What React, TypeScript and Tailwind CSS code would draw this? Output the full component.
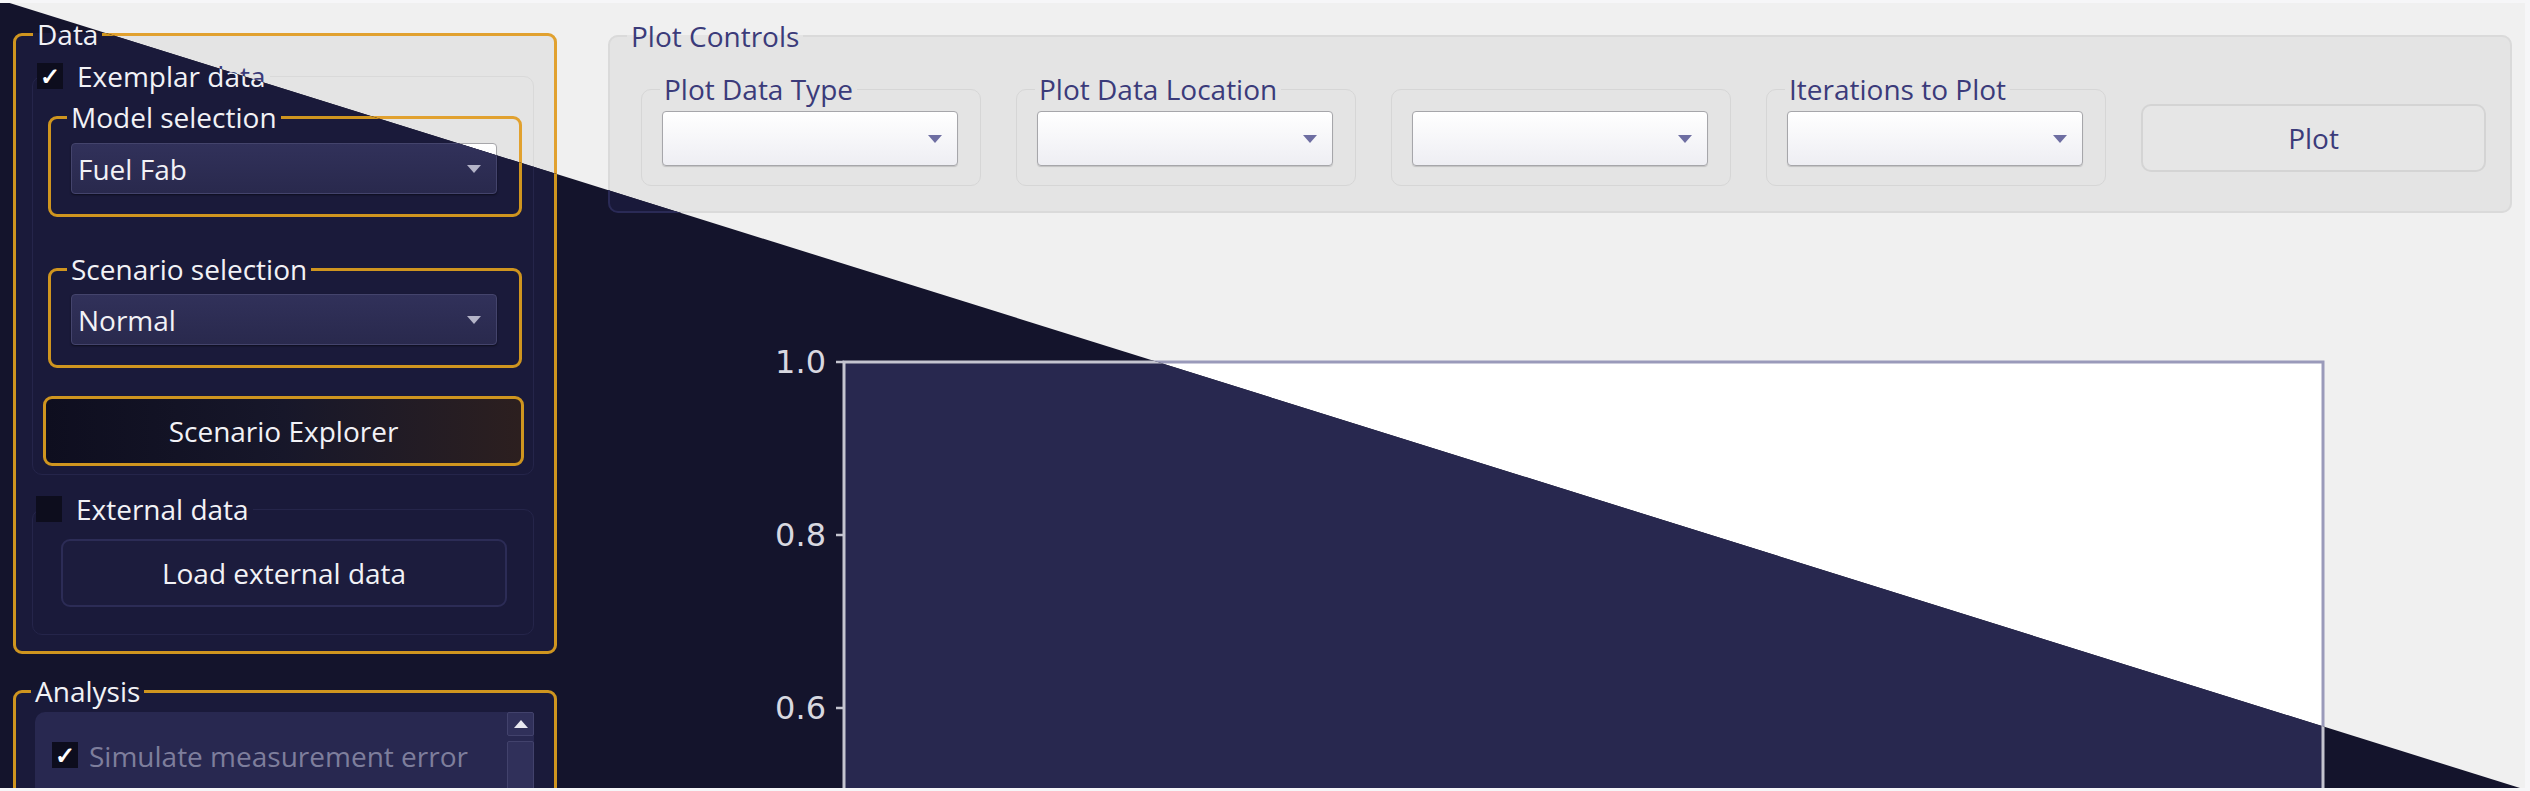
import type { ReactNode } from 'react'

type Theme = {
  page: string
  text: string
  dataBg: string
  orange: string
  sub: string
  combo: string
  comboText: string
  arrow: string
  check: string
  explorer: string
  loadBtn: string
  plotGroup: string
  box: string
  plotBtn: string
  scroll: string
  scrollBtn: string
  dimText: string
  plotBg: string
  frame: string
  tick: string
}

const light: Theme = {
  page: 'bg-[#f0f0f0]',
  text: 'text-[#3b3b7a]',
  dataBg: 'bg-[#e4e4e4]',
  orange: 'border-[#e1a12f]',
  sub: 'border-[#d9d9d9]',
  combo: 'border-[#a6a6aa] bg-linear-to-b from-white to-[#eeeef3] shadow-[0_1px_1px_rgba(0,0,0,0.15)]',
  comboText: 'text-[#3b3b7a]',
  arrow: '#6e6ea2',
  check: 'bg-white border border-[#a0a0a0] text-[#3b3b7a]',
  explorer: 'bg-linear-to-r from-[#f2f2f2] to-[#efe4d6] text-[#3b3b7a]',
  loadBtn: 'bg-[#e6e6e6] border-[#d2d2d2] text-[#3b3b7a]',
  plotGroup: 'bg-[#e4e4e4] border-[#dadada]',
  box: 'border-[#d6d6d6]',
  plotBtn: 'bg-[#e6e6e6] border-[#d4d4d4]',
  scroll: 'bg-[#ebebeb]',
  scrollBtn: 'bg-[#e0e0e0] border-[#c8c8c8]',
  dimText: 'text-[#9a9ab0]',
  plotBg: '#ffffff',
  frame: '#9a9aba',
  tick: '#3b3b7a',
}

const dark: Theme = {
  page: 'bg-[#14142c]',
  text: 'text-[#f2f2f6]',
  dataBg: 'bg-[#1a1a3a]',
  orange: 'border-[#cf951f]',
  sub: 'border-[#25254a]',
  combo: 'border-[#44446c] bg-linear-to-b from-[#31315a] to-[#29294d] shadow-[0_1px_2px_rgba(0,0,0,0.5)]',
  comboText: 'text-[#f2f2f6]',
  arrow: '#b4b4c8',
  check: 'bg-[#0d0d1d] text-white',
  explorer: 'bg-linear-to-r from-[#0e0e1f] via-[#17172a] to-[#2c1f1f] text-[#f2f2f6]',
  loadBtn: 'bg-[#1c1c3d] border-[#2c2c56] text-[#f2f2f6]',
  plotGroup: 'bg-[#19193a] border-[#2a2a56]',
  box: 'border-[#2a2a56]',
  plotBtn: 'bg-[#1c1c3d] border-[#2c2c56]',
  scroll: 'bg-[#282850]',
  scrollBtn: 'bg-[#30305a] border-[#42426c]',
  dimText: 'text-[#7e7e9c]',
  plotBg: '#28284f',
  frame: '#c4c4cf',
  tick: '#d8d8e0',
}

function Arrow({ color, up }: { color: string; up?: boolean }) {
  return (
    <svg width="14" height="8" viewBox="0 0 14 8">
      <polygon points={up ? '0,8 14,8 7,0' : '0,0 14,0 7,8'} fill={color} />
    </svg>
  )
}

function Combo({ t, value, className }: { t: Theme; value?: string; className: string }) {
  return (
    <div className={`flex items-center justify-between rounded-[4px] border pl-[6px] pr-[15px] ${t.combo} ${className}`}>
      <span className={t.comboText}>{value}</span>
      <Arrow color={t.arrow} />
    </div>
  )
}

function Check({ t, checked }: { t: Theme; checked?: boolean }) {
  return (
    <span className={`flex h-[26px] w-[26px] items-center justify-center text-[24px] font-bold leading-none ${t.check}`}>
      {checked ? '✓' : ''}
    </span>
  )
}

function Legend({ t, children, className }: { t: Theme; children: ReactNode; className: string }) {
  return <legend className={`px-[4px] leading-[28px] ${t.text} ${className}`}>{children}</legend>
}

const ticks = [
  { y: 34, l: '1.0' },
  { y: 207, l: '0.8' },
  { y: 380, l: '0.6' },
]

function Screen({ t }: { t: Theme }) {
  return (
    <div className={`flex h-[785px] w-[2525px] overflow-hidden text-[28px] ${t.page}`} style={{ fontFamily: '"Open Sans", "Noto Sans", sans-serif' }}>
      {/* left column */}
      <div className="w-[590px] shrink-0 pl-[13px] pt-[17px]">
        <fieldset className={`w-[544px] rounded-[9px] border-[3px] pb-[16px] ${t.orange} ${t.dataBg}`}>
          <Legend t={t} className="ml-[17px]">Data</Legend>

          <fieldset className={`ml-[16px] mt-[13px] w-[502px] rounded-[10px] border pb-[8px] ${t.sub}`}>
            <legend className="ml-[4px] leading-[30px]">
              <div className="flex h-[30px] items-center gap-[14px] pr-[4px]">
                <Check t={t} checked />
                <span className={t.text}>Exemplar data</span>
              </div>
            </legend>

            <fieldset className={`ml-[15px] mt-[12px] w-[474px] rounded-[9px] border-[3px] pb-[20px] ${t.orange}`}>
              <Legend t={t} className="ml-[16px]">Model selection</Legend>
              <Combo t={t} value="Fuel Fab" className="ml-[20px] mt-[12px] h-[51px] w-[426px]" />
            </fieldset>

            <fieldset className={`ml-[15px] mt-[38px] w-[474px] rounded-[9px] border-[3px] pb-[20px] ${t.orange}`}>
              <Legend t={t} className="ml-[16px]">Scenario selection</Legend>
              <Combo t={t} value="Normal" className="ml-[20px] mt-[11px] h-[51px] w-[426px]" />
            </fieldset>

            <button className={`ml-[10px] mt-[28px] flex h-[70px] w-[481px] items-center justify-center rounded-[9px] border-[3px] ${t.orange} ${t.explorer}`}>
              Scenario Explorer
            </button>
          </fieldset>

          <fieldset className={`ml-[16px] mt-[20px] w-[502px] rounded-[10px] border pb-[27px] ${t.sub}`}>
            <legend className="ml-[3px] leading-[28px]">
              <div className="flex h-[28px] items-center gap-[14px] pr-[4px]">
                <Check t={t} />
                <span className={t.text}>External data</span>
              </div>
            </legend>
            <button className={`ml-[28px] mt-[16px] flex h-[68px] w-[446px] items-center justify-center rounded-[9px] border-2 ${t.loadBtn}`}>
              Load external data
            </button>
          </fieldset>
        </fieldset>

        <fieldset className={`mt-[23px] w-[544px] rounded-[9px] border-[3px] pb-[40px] ${t.orange} ${t.dataBg}`}>
          <Legend t={t} className="ml-[15px]">Analysis</Legend>
          <div className={`ml-[19px] mt-[7px] flex h-[200px] w-[499px] rounded-t-[10px] ${t.scroll}`}>
            <div className="flex flex-1 items-start gap-[11px] pl-[17px] pt-[30px]">
              <Check t={t} checked />
              <span className={`leading-[28px] ${t.dimText}`}>Simulate measurement error</span>
            </div>
            <div className="flex w-[27px] flex-col gap-[5px]">
              <div className={`flex h-[24px] items-center justify-center rounded-[2px] border ${t.scrollBtn}`}>
                <Arrow color="#e8e8f0" up />
              </div>
              <div className={`flex-1 rounded-[2px] border ${t.scrollBtn}`} />
            </div>
          </div>
        </fieldset>
      </div>

      {/* right column */}
      <div className="flex flex-1 flex-col pt-[19px]">
        <fieldset className={`ml-[18px] h-[197px] w-[1904px] rounded-[10px] border-2 ${t.plotGroup}`}>
          <Legend t={t} className="ml-[17px]">Plot Controls</Legend>
          <div className="flex items-start gap-[35px] pl-[31px] pt-[25px]">
            {['Plot Data Type', 'Plot Data Location', '', 'Iterations to Plot'].map((label, i) => (
              <fieldset key={i} className={`w-[340px] rounded-[10px] border pb-[19px] ${t.box}`}>
                <legend className={`ml-[18px] h-[28px] leading-[28px] ${label ? 'px-[4px]' : 'px-0'} ${t.text}`}>{label}</legend>
                <Combo t={t} className="ml-[20px] mt-[8px] h-[55px] w-[296px]" />
              </fieldset>
            ))}
            <button className={`mt-[29px] flex h-[68px] w-[345px] items-center justify-center rounded-[10px] border-2 ${t.plotBtn} ${t.text}`}>
              Plot
            </button>
          </div>
        </fieldset>

        <svg className="ml-[110px] mt-[115px] shrink-0" width="1700" height="460" style={{ fontFamily: '"DejaVu Sans", sans-serif' }}>
          <rect x="144" y="34" width="1479" height="1000" fill={t.plotBg} stroke={t.frame} strokeWidth="3" />
          {ticks.map((tk) => (
            <g key={tk.l}>
              <line x1="136" x2="144" y1={tk.y} y2={tk.y} stroke={t.frame} strokeWidth="2.5" />
              <text x="126" y={tk.y} textAnchor="end" dominantBaseline="central" fontSize="32" fill={t.tick}>
                {tk.l}
              </text>
            </g>
          ))}
        </svg>
      </div>
    </div>
  )
}

export default function App() {
  return (
    <div className="relative h-[791px] w-[2530px] overflow-hidden bg-[#f6f6f8]">
      <div className="pt-[3px]">
        <Screen t={light} />
      </div>
      <div className="absolute left-0 top-[3px] [clip-path:polygon(0_-3px,2520px_785px,0_785px)]">
        <Screen t={dark} />
      </div>
    </div>
  )
}
